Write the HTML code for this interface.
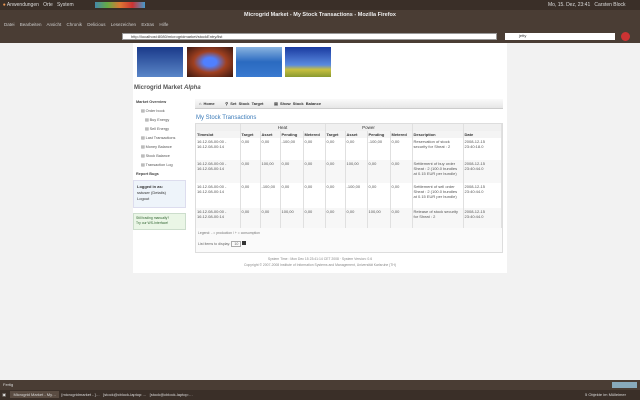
<!DOCTYPE html>
<html><head><meta charset="utf-8"><style>
*{margin:0;padding:0;box-sizing:border-box}
body{width:640px;height:400px;overflow:hidden;background:#f2f2f2;font-family:"Liberation Sans",sans-serif;font-size:4px;color:#333;position:relative}
.abs{position:absolute}
.top{left:0;top:0;width:640px;height:10px;background:#3a2f28;color:#ddd;font-size:5px;line-height:10px}
.title{left:0;top:10px;width:640px;height:10px;background:#4a3d34;color:#eee;font-size:5.5px;line-height:10px;text-align:center;font-weight:bold}
.menu{left:0;top:20px;width:640px;height:10px;background:#4a3d34;color:#ccc;font-size:4.5px;line-height:10px;padding-left:4px;word-spacing:4px}
.nav{left:0;top:30px;width:640px;height:13px;background:#4a3d34}
.url{left:122px;top:33px;width:375px;height:7px;background:#fff;border:1px solid #999;font-size:4px;line-height:6px;padding-left:8px}
.srch{left:505px;top:33px;width:110px;height:7px;background:#fff;font-size:4px;line-height:6px;padding-left:14px}
.page{left:133px;top:43px;width:374px;height:230px;background:#fff}
.img{top:47px;height:30px;width:46px}
.side a{display:block}
table{border-collapse:collapse;font-size:4px;color:#555;table-layout:fixed}
td,th{border-right:1px solid #e0e0e0;padding:1px;vertical-align:top;text-align:left;word-wrap:break-word}
th{font-weight:bold;color:#333}
.status{left:0;top:380px;width:640px;height:10px;background:#4a3d34;color:#ddd;font-size:4px;line-height:10px;padding-left:3px}
.task{left:0;top:390px;width:640px;height:10px;background:#3a2f28;color:#ddd;font-size:4px;line-height:10px}
</style></head><body>
<div class="abs top">&nbsp;&nbsp;<span style="color:#e95">●</span> Anwendungen &nbsp; Orte &nbsp; System
<span style="position:absolute;left:548px">Mo, 15. Dez, 23:41 &nbsp; Carsten Block</span>
<span style="position:absolute;left:95px;top:2px;width:50px;height:6px;background:linear-gradient(90deg,#48a,#6a4,#d73,#c33,#49c)"></span></div>
<div class="abs title">Microgrid Market - My Stock Transactions - Mozilla Firefox</div>
<div class="abs menu">Datei Bearbeiten Ansicht Chronik Delicious Lesezeichen Extras Hilfe</div>
<div class="abs nav"></div>
<div class="abs url">http://localhost:8080/microgridmarket/stockEntry/list</div>
<div class="abs srch">jetty</div>
<div class="abs" style="left:621px;top:32px;width:9px;height:9px;border-radius:50%;background:#c33"></div>
<div class="abs page"></div>
<div class="abs img" style="left:137px;background:linear-gradient(#1a3a8a,#5a86c8)"></div>
<div class="abs img" style="left:187px;background:radial-gradient(#5080ff 20%,#a04020 50%,#3a1810)"></div>
<div class="abs img" style="left:236px;background:linear-gradient(#8ab4e0,#2a6ac0 50%,#3a7ad0)"></div>
<div class="abs img" style="left:285px;background:linear-gradient(#1a3aa0,#5a8ae0 60%,#c8c040 75%,#8a9a30)"></div>
<div class="abs" style="left:134px;top:85px;font-size:6px;font-weight:bold;color:#555">Microgrid Market <i>Alpha</i></div>
<div class="abs side" style="left:136px;top:98px;font-size:3.8px;color:#555;line-height:9px">
<a style="font-weight:bold;color:#444">Market Overview</a>
<a style="padding-left:5px">▤ Order book</a><a style="padding-left:9px">▤ Buy Energy</a><a style="padding-left:9px">▤ Sell Energy</a>
<a style="padding-left:5px">▤ Last Transactions</a><a style="padding-left:5px">▤ Money Balance</a><a style="padding-left:5px">▤ Stock Balance</a><a style="padding-left:5px">▤ Transaction Log</a>
<a style="font-weight:bold;color:#444">Report Bugs</a></div>
<div class="abs" style="left:133px;top:180px;width:53px;height:28px;background:#eef4fa;border:1px solid #dde;font-size:4px;padding:3px;line-height:6px"><b>Logged in as:</b><br>sstuser (Details)<br>Logout</div>
<div class="abs" style="left:133px;top:213px;width:53px;height:17px;background:#eaf6e6;border:1px solid #cdc;font-size:3.4px;padding:2px;line-height:5px;color:#363">Still trading manually?<br>Try our WS-Interface!</div>
<div class="abs" style="left:195px;top:99px;width:308px;height:10px;background:linear-gradient(#fafafa,#e6e6e6);border-bottom:1px solid #ccc;font-size:4px;font-weight:bold;line-height:10px;padding-left:4px;word-spacing:1px">⌂ Home &nbsp;&nbsp;&nbsp; ⚲ Set Stock Target &nbsp;&nbsp;&nbsp; ▤ Show Stock Balance</div>
<div class="abs" style="left:196px;top:115px;font-size:6px;color:#3a7ab8">My Stock Transactions</div>
<div class="abs" style="left:195px;top:123px;width:308px;height:130px;border:1px solid #ddd;background:#fafafa">
<table style="width:306px;background:#fff">
<colgroup><col style="width:44px"><col style="width:20px"><col style="width:20px"><col style="width:23px"><col style="width:22px"><col style="width:20px"><col style="width:22px"><col style="width:23px"><col style="width:22px"><col style="width:51px"><col></colgroup>
<tr style="background:#f0f0f0;height:7px"><th></th><th colspan="4" style="text-align:center;font-weight:normal;font-size:4.5px">Heat</th><th colspan="4" style="text-align:center;font-weight:normal;font-size:4.5px">Power</th><th></th><th></th></tr>
<tr style="background:#f4f4f4;height:7px"><th>Timeslot</th><th>Target</th><th>Asset</th><th>Pending</th><th>Metered</th><th>Target</th><th>Asset</th><th>Pending</th><th>Metered</th><th>Description</th><th>Date</th></tr>
<tr style="height:22px"><td>16.12.08-00:00 - 16.12.08-00:14</td><td>0,00</td><td>0,00</td><td>-100,00</td><td>0,00</td><td>0,00</td><td>0,00</td><td>-100,00</td><td>0,00</td><td>Reservation of stock security for Sheat : 2</td><td>2008-12-15 23:40:18.0</td></tr>
<tr style="height:23px;background:#f7f7f7"><td>16.12.08-00:00 - 16.12.08-00:14</td><td>0,00</td><td>100,00</td><td>0,00</td><td>0,00</td><td>0,00</td><td>100,00</td><td>0,00</td><td>0,00</td><td>Settlement of buy order Sheat : 2 (100.0 bundles at 0.15 EUR per bundle)</td><td>2008-12-15 23:40:44.0</td></tr>
<tr style="height:25px"><td>16.12.08-00:00 - 16.12.08-00:14</td><td>0,00</td><td>-100,00</td><td>0,00</td><td>0,00</td><td>0,00</td><td>-100,00</td><td>0,00</td><td>0,00</td><td>Settlement of sell order Sheat : 2 (100.0 bundles at 0.15 EUR per bundle)</td><td>2008-12-15 23:40:44.0</td></tr>
<tr style="height:20px;background:#f7f7f7"><td>16.12.08-00:00 - 16.12.08-00:14</td><td>0,00</td><td>0,00</td><td>100,00</td><td>0,00</td><td>0,00</td><td>0,00</td><td>100,00</td><td>0,00</td><td>Release of stock security for Sheat : 2</td><td>2008-12-15 23:40:44.0</td></tr>
</table>
<div style="font-size:3.4px;color:#777;padding:3px 2px">Legend: - = production / + = consumption</div>
<div style="font-size:3.6px;color:#666;padding:3px 2px">List items to display: <span style="border:1px solid #aaa;padding:0 2px">10</span> <span style="display:inline-block;width:4px;height:4px;background:#333"></span></div>
</div>
<div class="abs" style="left:133px;top:256px;width:374px;text-align:center;font-size:3.4px;color:#888;line-height:6px">System Time : Mon Dec 15 23:41:14 CET 2008 · System Version: 0.6<br>Copyright © 2007-2008 Institute of Information Systems and Management, Universität Karlsruhe (TH)</div>
<div class="abs status">Fertig<span style="position:absolute;left:612px;top:2px;width:25px;height:6px;background:#8ab"></span></div>
<div class="abs task">&nbsp;&nbsp;▣ &nbsp;&nbsp;&nbsp;<span style="background:#5a4c42;padding:1px 3px">Microgrid Market - My…</span>&nbsp; [microgridmarket - ]…&nbsp;&nbsp; [stock@cblock-laptop:…&nbsp;&nbsp; [stock@cblock-laptop:…
<span style="position:absolute;left:585px">5 Objekte im Mülleimer</span></div>
</body></html>
